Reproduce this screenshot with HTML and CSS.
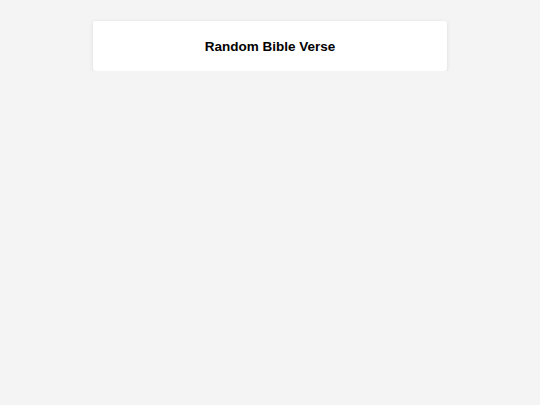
FILE: index.html
```html
<!DOCTYPE html>
<html lang="en">
<head>
<meta charset="utf-8">
<title>Random Bible Verse</title>
<link rel="stylesheet" href="styles.css">
</head>
<body>
<main class="page">
  <section class="card">
    <h1 class="title">Random Bible Verse</h1>
  </section>
</main>
</body>
</html>
```
FILE: styles.css
```css
html, body {
  margin: 0;
  padding: 0;
  background: #f4f4f4;
  font-family: "Liberation Sans", Arial, sans-serif;
}
.page {
  padding-top: 21px;
  display: flex;
  justify-content: center;
}
.card {
  width: 354px;
  height: 50px;
  background: #ffffff;
  border-radius: 3px;
  box-shadow: 0 1px 4px rgba(0, 0, 0, 0.1);
  display: flex;
  align-items: center;
  justify-content: center;
}
.title {
  margin: 0;
  font-size: 13.5px;
  font-weight: bold;
  color: #000;
}
```
